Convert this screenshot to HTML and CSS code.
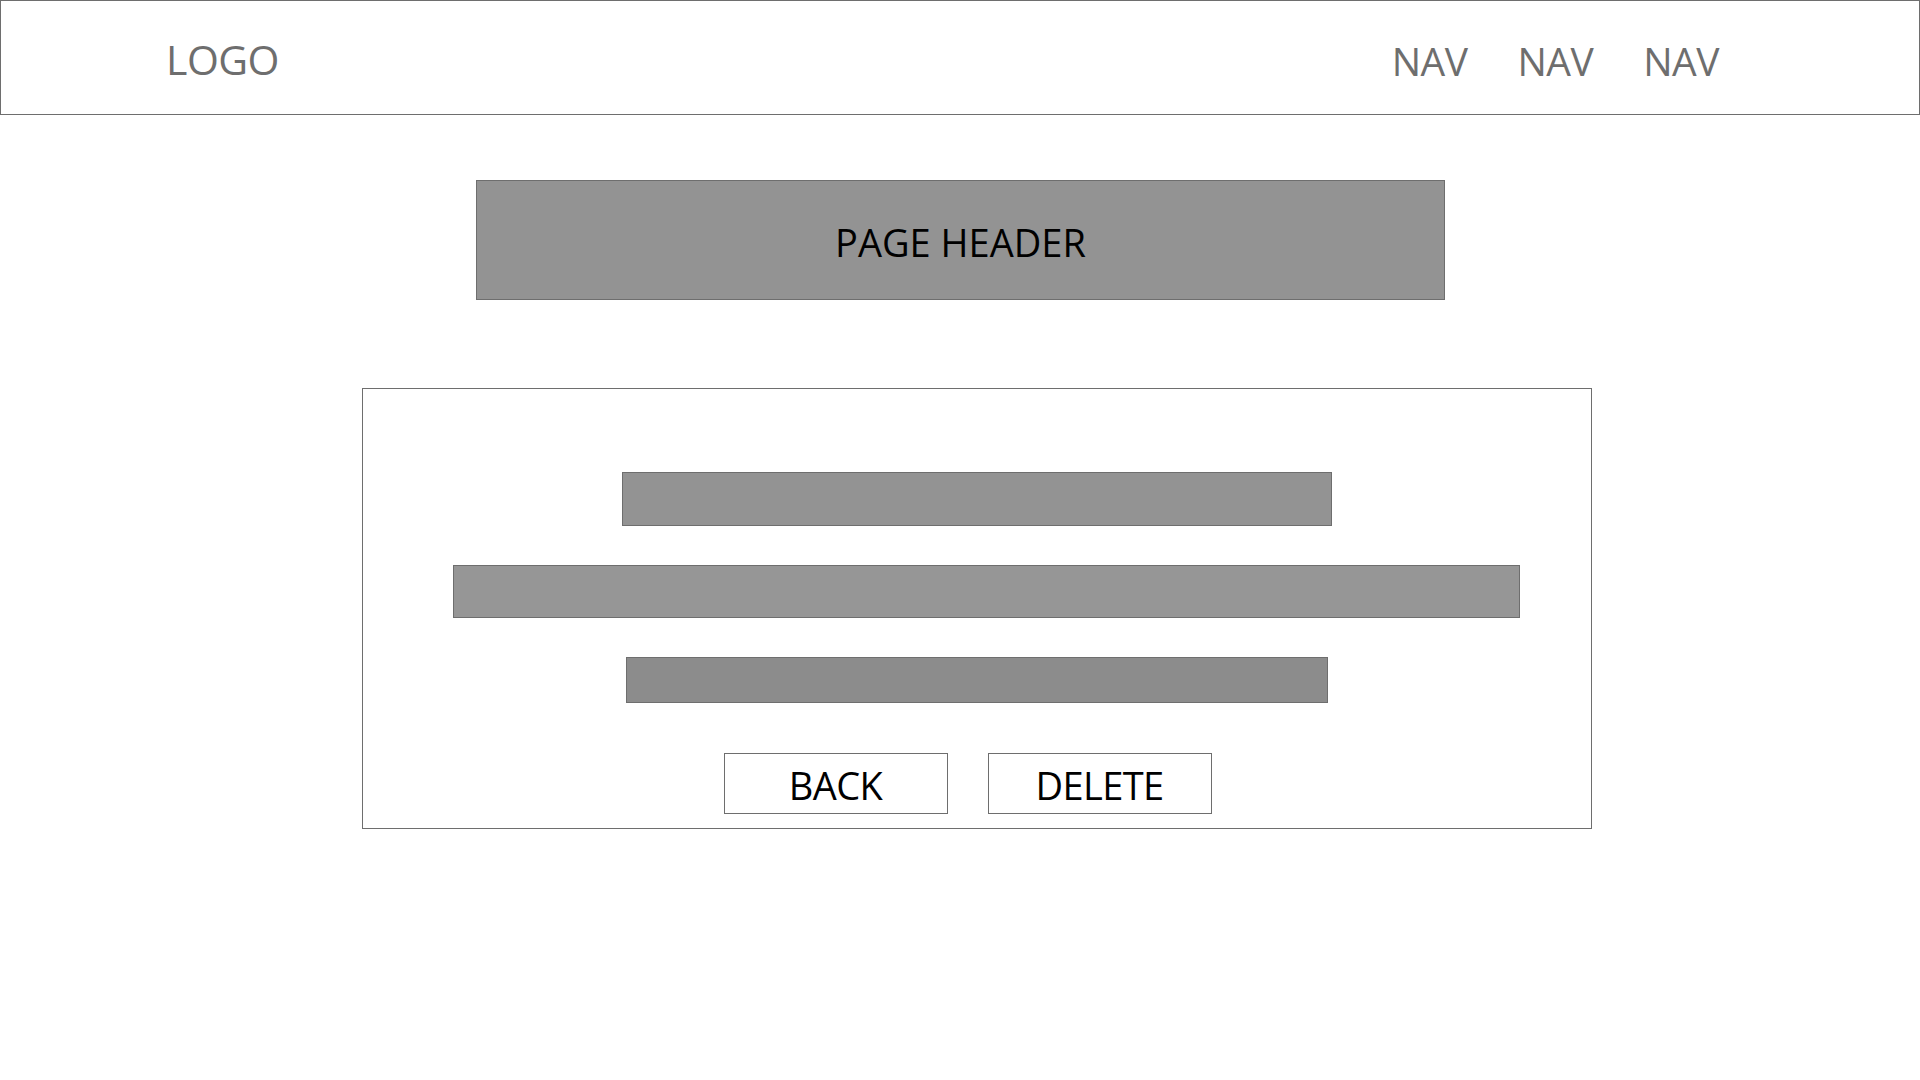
FILE: index.html
```html
<!DOCTYPE html>
<html lang="en">
<head>
<meta charset="utf-8">
<title>Delete item</title>
<link rel="stylesheet" href="styles.css">
</head>
<body>
<header class="topbar">
  <div class="logo">LOGO</div>
  <nav class="nav">
    <a class="nav-item">NAV</a>
    <a class="nav-item">NAV</a>
    <a class="nav-item">NAV</a>
  </nav>
</header>
<main class="main">
  <div class="page-header">PAGE HEADER</div>
  <section class="card">
    <div class="bar bar-1"></div>
    <div class="bar bar-2"></div>
    <div class="bar bar-3"></div>
    <div class="actions">
      <button class="btn">BACK</button>
      <button class="btn">DELETE</button>
    </div>
  </section>
</main>
</body>
</html>
```

FILE: styles.css
```css
* { box-sizing: border-box; }
html, body { margin: 0; padding: 0; background: #ffffff; }
body { font-family: "Open Sans", "Noto Sans", sans-serif; width: 1920px; height: 1080px; overflow: hidden; }

.topbar {
  height: 115px;
  border: 1px solid #6e6e6e;
  display: flex;
  align-items: flex-start;
  justify-content: space-between;
  padding: 0 200px 0 165px;
}
.logo {
  font-size: 41px;
  color: #6e6e6e;
  line-height: 1;
  margin-top: 38px;
  letter-spacing: -0.5px;
}
.nav { display: flex; gap: 50px; margin-top: 40px; }
.nav-item { font-size: 39px; color: #6e6e6e; line-height: 1; letter-spacing: -0.5px; }

.main { display: flex; flex-direction: column; align-items: flex-start; }

.page-header {
  margin: 65px 0 0 476px;
  width: 969px;
  height: 120px;
  background: #939393;
  border: 1px solid #6e6e6e;
  display: flex;
  align-items: center;
  justify-content: center;
  font-size: 38px;
  color: #000;
  padding-top: 4px;
  letter-spacing: 0;
}

.card {
  margin: 88px 0 0 362px;
  width: 1230px;
  height: 441px;
  border: 1px solid #6e6e6e;
  display: flex;
  flex-direction: column;
  align-items: center;
  padding-top: 83px;
}
.bar { border: 1px solid #6e6e6e; background: #939393; }
.bar-1 { width: 710px; height: 54px; }
.bar-2 { width: 1067px; height: 53px; margin-top: 39px; margin-left: 19px; background: #969696; }
.bar-3 { width: 702px; height: 46px; margin-top: 39px; background: #8c8c8c; }

.actions { display: flex; gap: 40px; margin-top: 50px; margin-right: 19px; }
.btn {
  width: 224px;
  height: 61px;
  border: 1px solid #6e6e6e;
  background: #fff;
  font-family: "Open Sans", "Noto Sans", sans-serif;
  font-size: 38px;
  color: #000;
  padding: 2px 0 0;
  line-height: 1;
  letter-spacing: -0.6px;
}
```
